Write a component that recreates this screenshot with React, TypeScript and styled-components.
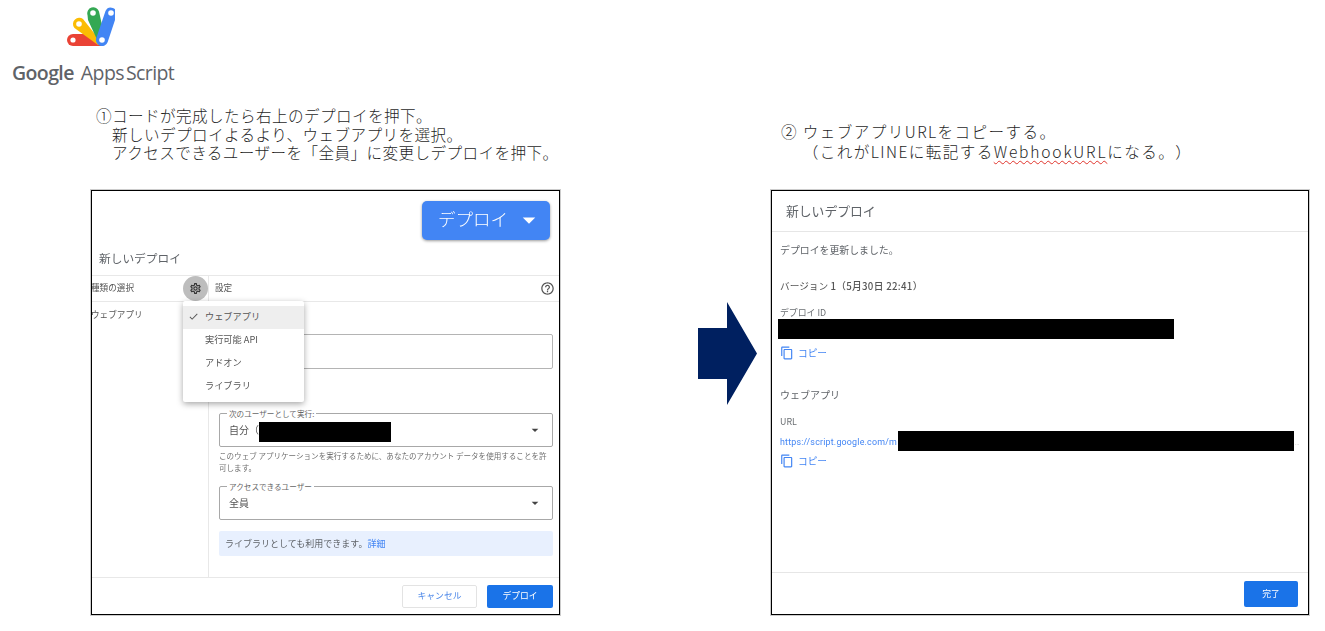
import React from "react";
import styled, { createGlobalStyle } from "styled-components";
import {
  MdArrowDropDown,
  MdCheck,
  MdHelpOutline,
  MdOutlineContentCopy,
  MdOutlineSettings,
} from "react-icons/md";

const GlobalStyle = createGlobalStyle`
  html, body {
    margin: 0;
    background: #fff;
  }
  body {
    font-family: "Noto Sans CJK JP", "Noto Sans", sans-serif;
    text-spacing-trim: space-all;
  }
`;

const Page = styled.div`
  width: 1325px;
  height: 631px;
  overflow: hidden;
  display: flex;
  flex-direction: column;
`;

const Brand = styled.header`
  height: 100px;
  padding: 6px 0 0 12px;
  box-sizing: border-box;
  display: flex;
  flex-direction: column;
`;

const BrandName = styled.div`
  margin-top: 12px;
  font-family: "Open Sans", sans-serif;
  font-size: 19.5px;
  line-height: 26px;
  color: #5f6368;
  letter-spacing: -0.6px;
  white-space: nowrap;
  b {
    font-weight: 600;
    margin-right: 7px;
  }
  span {
    margin-right: 2px;
  }
`;

const Slides = styled.main`
  display: grid;
  grid-template-columns: 469px 138px 73px 538px;
  margin-left: 91px;
`;

const Step = styled.section`
  display: flex;
  flex-direction: column;
`;

const Caption = styled.div<{ $top: number; $left: number; $spread: number; $leading: number }>`
  height: 90px;
  box-sizing: border-box;
  padding: ${(p) => p.$top}px 0 0 ${(p) => p.$left}px;
  font-size: 15.6px;
  font-weight: 300;
  line-height: ${(p) => p.$leading}px;
  letter-spacing: ${(p) => p.$spread}px;
  color: #1f1f1f;
  white-space: pre;
`;

const Squiggle = styled.span`
  letter-spacing: 1.8px;
  text-decoration: underline wavy #e0342c 1px;
  text-underline-offset: 2px;
`;

const ArrowSlot = styled.div`
  grid-column: 3;
  padding-top: 202px;
`;

const Panel = styled.div`
  height: 425px;
  box-sizing: border-box;
  border: 1px solid #000;
  box-shadow: 0 0 0 1px rgba(0, 0, 0, 0.2);
  overflow: hidden;
  display: flex;
  flex-direction: column;
  color: #5f6368;
  > * {
    filter: blur(0.3px);
  }
`;

const TopBar = styled.div`
  display: flex;
  justify-content: flex-end;
  padding: 10px 9px 0 0;
`;

const BigButton = styled.div`
  width: 128px;
  height: 39px;
  box-sizing: border-box;
  padding: 0 0 4px 16px;
  display: flex;
  align-items: center;
  background: #4285f4;
  border-radius: 5px;
  box-shadow: 0 1px 3px rgba(0, 0, 0, 0.4);
  color: #fff;
  font-size: 17.5px;
  font-weight: 300;
  svg {
    margin: 3px 0 0 6px;
  }
`;

const DialogTitle = styled.div`
  height: 36px;
  padding-left: 7px;
  box-sizing: border-box;
  border-bottom: 1px solid #e8e8e8;
  font-size: 11.7px;
  line-height: 35px;
`;

const TypeRow = styled.div`
  height: 26px;
  box-sizing: border-box;
  display: grid;
  grid-template-columns: 116px 1fr;
  border-bottom: 1px solid #e8e8e8;
  font-size: 8.6px;
  color: #555;
`;

const TypeCell = styled.div`
  display: flex;
  align-items: center;
  justify-content: space-between;
  margin-left: -1px;
`;

const RowLabel = styled.span`
  margin-bottom: 3px;
`;

const SettingsCell = styled.div`
  display: flex;
  align-items: center;
  justify-content: space-between;
  padding: 0 4px 0 6px;
  border-left: 1px solid #e8e8e8;
  svg {
    color: #555;
  }
`;

const GearCircle = styled.div`
  width: 25px;
  height: 25px;
  border-radius: 50%;
  background: #bdbdbd;
  display: flex;
  align-items: center;
  justify-content: center;
  color: #333;
`;

const FormArea = styled.div`
  position: relative;
  height: 275px;
  display: grid;
  grid-template-columns: 116px 1fr;
  border-bottom: 1px solid #e8e8e8;
`;

const SideLabel = styled.div`
  margin-left: -1px;
  padding-top: 5px;
  font-size: 8.6px;
  line-height: 14px;
  color: #555;
`;

const Fields = styled.div`
  border-left: 1px solid #e8e8e8;
  padding: 32px 6px 0 10px;
  display: flex;
  flex-direction: column;
`;

const BlankInput = styled.div`
  height: 35px;
  box-sizing: border-box;
  border: 1px solid #b4b4b4;
  border-radius: 2px;
  margin-bottom: 44px;
`;

const SelectBox = styled.div`
  position: relative;
  height: 34px;
  box-sizing: border-box;
  border: 1px solid #a8a8a8;
  border-radius: 2px;
  padding: 0 9px 2px;
  display: flex;
  align-items: center;
  font-size: 10px;
  color: #555;
  svg {
    margin: 2px 0 0 auto;
    color: #444;
  }
`;

const Legend = styled.span`
  position: absolute;
  left: 7px;
  top: -6px;
  padding: 0 2px;
  background: #fff;
  font-size: 7.6px;
  line-height: 11px;
  color: #666;
`;

const Redaction = styled.div<{ $width: number }>`
  width: ${(p) => p.$width}px;
  height: 20px;
  flex: none;
  background: #000;
`;

const AccountBar = styled(Redaction)`
  margin-top: 6px;
`;

const HelpText = styled.p`
  margin: 3px 0 12px;
  font-size: 7.55px;
  line-height: 12px;
  color: #6f6f6f;
`;

const InfoBox = styled.div`
  margin-top: 11px;
  height: 25px;
  padding-left: 6px;
  background: #e8f0fe;
  border-radius: 2px;
  font-size: 9px;
  line-height: 25px;
  color: #5f6368;
  a {
    color: #4285f4;
  }
`;

const DropMenu = styled.div`
  position: absolute;
  left: 91px;
  top: -1px;
  width: 121px;
  height: 101px;
  box-sizing: border-box;
  padding-top: 5px;
  background: #fff;
  border-radius: 2px;
  box-shadow: 0 2px 6px rgba(0, 0, 0, 0.35);
  z-index: 2;
`;

const MenuItem = styled.div<{ $active?: boolean }>`
  height: 23px;
  padding-left: 22px;
  position: relative;
  background: ${(p) => (p.$active ? "#eeeeee" : "transparent")};
  font-size: 9.2px;
  line-height: 20px;
  color: #555;
  svg {
    position: absolute;
    left: 5px;
    top: 5px;
  }
`;

const LeftFooter = styled.div`
  flex: 1;
  display: flex;
  justify-content: flex-end;
  gap: 10px;
  padding: 7px 6px 0 0;
`;

const GhostButton = styled.div`
  width: 75px;
  height: 23px;
  box-sizing: border-box;
  border: 1px solid #e3e3e3;
  border-radius: 2px;
  text-align: center;
  font-size: 8.8px;
  line-height: 20px;
  color: #4a86e8;
`;

const SolidButton = styled.div<{ $width: number; $height: number }>`
  width: ${(p) => p.$width}px;
  height: ${(p) => p.$height}px;
  background: #1a73e8;
  border-radius: 2px;
  text-align: center;
  font-size: 8.8px;
  line-height: ${(p) => p.$height - 1}px;
  color: #fff;
`;

const ResultTitle = styled.div`
  height: 41px;
  box-sizing: border-box;
  padding-left: 14px;
  border-bottom: 1px solid #e6e6e6;
  font-size: 12.8px;
  line-height: 40px;
`;

const ResultBody = styled.div`
  flex: 1;
  padding-left: 8px;
  display: flex;
  flex-direction: column;
`;

const StatusLine = styled.div`
  margin-top: 11px;
  font-size: 9.9px;
  line-height: 14px;
`;

const VersionLine = styled.div`
  margin-top: 22px;
  font-size: 9.7px;
  line-height: 14px;
  color: #555;
  b {
    font-weight: 500;
    letter-spacing: 0.3px;
  }
`;

const SmallLabel = styled.div`
  margin-top: 14px;
  font-size: 8.9px;
  line-height: 12px;
  color: #6b6f73;
`;

const IdBar = styled(Redaction)`
  margin-left: -2px;
`;

const CopyLink = styled.div<{ $top: number }>`
  margin-top: ${(p) => p.$top}px;
  height: 14px;
  display: flex;
  align-items: center;
  gap: 4px;
  font-size: 9.7px;
  color: #4285f4;
`;

const SectionHead = styled.div`
  margin-top: 28px;
  font-size: 10px;
  line-height: 14px;
`;

const UrlRow = styled.div`
  margin-top: 3px;
  height: 20px;
  display: flex;
  align-items: center;
  font-size: 8.9px;
  font-family: "Roboto", sans-serif;
  color: #4285f4;
  letter-spacing: 0.2px;
  span {
    width: 118px;
    overflow: hidden;
    white-space: nowrap;
    padding-top: 2px;
  }
`;

const Overflowed = styled.i`
  margin: 4px 0 0 1px;
  font-style: normal;
  font-size: 5px;
  line-height: 6px;
  color: #999;
`;

const ResultFooter = styled.div`
  height: 42px;
  box-sizing: border-box;
  border-top: 1px solid #e6e6e6;
  padding: 8px 10px 0 0;
  display: flex;
  justify-content: flex-end;
`;

const GasLogo = () => (
  <svg width="115" height="42" viewBox="0 6 115 42" style={{ marginLeft: -12 }}>
    <path d="M73 34H92L102 46H73A6 6 0 0 1 73 34Z" fill="#ea4335" />
    <path d="M75 19.5A6 6 0 0 1 83 19L102 43L98 45L74.5 28A6 6 0 0 1 75 19.5Z" fill="#fbbc04" />
    <path d="M87.5 15A6 6 0 0 1 99 11.5L104 34L100 46L88 20Z" fill="#34a853" />
    <path d="M105.5 11A6 6 0 0 1 116.7 15L107.7 42A6 6 0 0 1 96.3 38Z" fill="#4285f4" />
    <circle cx="73" cy="40" r="2.6" fill="#fff" />
    <circle cx="79" cy="24" r="2.8" fill="#fff" />
    <circle cx="93" cy="13" r="2.8" fill="#fff" />
    <circle cx="111" cy="13" r="2.8" fill="#fff" />
    <circle cx="102" cy="40" r="2.8" fill="#fff" />
  </svg>
);

const NextArrow = () => (
  <svg width="59" height="103" viewBox="0 0 59 103">
    <path d="M0 26H29V0L59 51.5L29 103V77H0Z" fill="#002060" />
  </svg>
);

const MENU_ITEMS = ["実行可能 API", "アドオン", "ライブラリ"];

export default function App() {
  return (
    <Page>
      <GlobalStyle />
      <Brand>
        <GasLogo />
        <BrandName>
          <b>Google</b>
          <span>Apps</span>Script
        </BrandName>
      </Brand>
      <Slides>
        <Step>
          <Caption $top={6} $left={5} $spread={0.4} $leading={18.7}>
            {"①コードが完成したら右上のデプロイを押下。\n　新しいデプロイよるより、ウェブアプリを選択。\n　アクセスできるユーザーを「全員」に変更しデプロイを押下。"}
          </Caption>
          <Panel>
            <TopBar>
              <BigButton>
                デプロイ
                <MdArrowDropDown size={30} />
              </BigButton>
            </TopBar>
            <DialogTitle>新しいデプロイ</DialogTitle>
            <TypeRow>
              <TypeCell>
                <RowLabel>種類の選択</RowLabel>
                <GearCircle>
                  <MdOutlineSettings size={13} />
                </GearCircle>
              </TypeCell>
              <SettingsCell>
                <RowLabel>設定</RowLabel>
                <MdHelpOutline size={15} />
              </SettingsCell>
            </TypeRow>
            <FormArea>
              <SideLabel>ウェブアプリ</SideLabel>
              <Fields>
                <BlankInput />
                <SelectBox>
                  <Legend>次のユーザーとして実行:</Legend>
                  自分（
                  <AccountBar $width={132} />
                  <MdArrowDropDown size={16} />
                </SelectBox>
                <HelpText>
                  このウェブ アプリケーションを実行するために、あなたのアカウント データを使用することを許可します。
                </HelpText>
                <SelectBox>
                  <Legend>アクセスできるユーザー</Legend>
                  全員
                  <MdArrowDropDown size={16} />
                </SelectBox>
                <InfoBox>
                  ライブラリとしても利用できます。<a>詳細</a>
                </InfoBox>
              </Fields>
              <DropMenu>
                <MenuItem $active>
                  <MdCheck size={11} />
                  ウェブアプリ
                </MenuItem>
                {MENU_ITEMS.map((item) => (
                  <MenuItem key={item}>{item}</MenuItem>
                ))}
              </DropMenu>
            </FormArea>
            <LeftFooter>
              <GhostButton>キャンセル</GhostButton>
              <SolidButton $width={66} $height={23}>
                デプロイ
              </SolidButton>
            </LeftFooter>
          </Panel>
        </Step>
        <ArrowSlot>
          <NextArrow />
        </ArrowSlot>
        <Step>
          <Caption $top={21} $left={10} $spread={1.4} $leading={20}>
            {"② ウェブアプリURLをコピーする。\n"}
            {"　 （これがLINEに転記する"}
            <Squiggle>WebhookURL</Squiggle>
            {"になる。）"}
          </Caption>
          <Panel>
            <ResultTitle>新しいデプロイ</ResultTitle>
            <ResultBody>
              <StatusLine>デプロイを更新しました。</StatusLine>
              <VersionLine>
                バージョン <b>1（5月30日 22:41）</b>
              </VersionLine>
              <SmallLabel>デプロイ ID</SmallLabel>
              <IdBar $width={396} />
              <CopyLink $top={7}>
                <MdOutlineContentCopy size={14} />
                コピー
              </CopyLink>
              <SectionHead>ウェブアプリ</SectionHead>
              <SmallLabel>URL</SmallLabel>
              <UrlRow>
                <span>https://script.google.com/m</span>
                <Redaction $width={396} />
                <Overflowed>...</Overflowed>
              </UrlRow>
              <CopyLink $top={3}>
                <MdOutlineContentCopy size={14} />
                コピー
              </CopyLink>
            </ResultBody>
            <ResultFooter>
              <SolidButton $width={54} $height={26}>
                完了
              </SolidButton>
            </ResultFooter>
          </Panel>
        </Step>
      </Slides>
    </Page>
  );
}
